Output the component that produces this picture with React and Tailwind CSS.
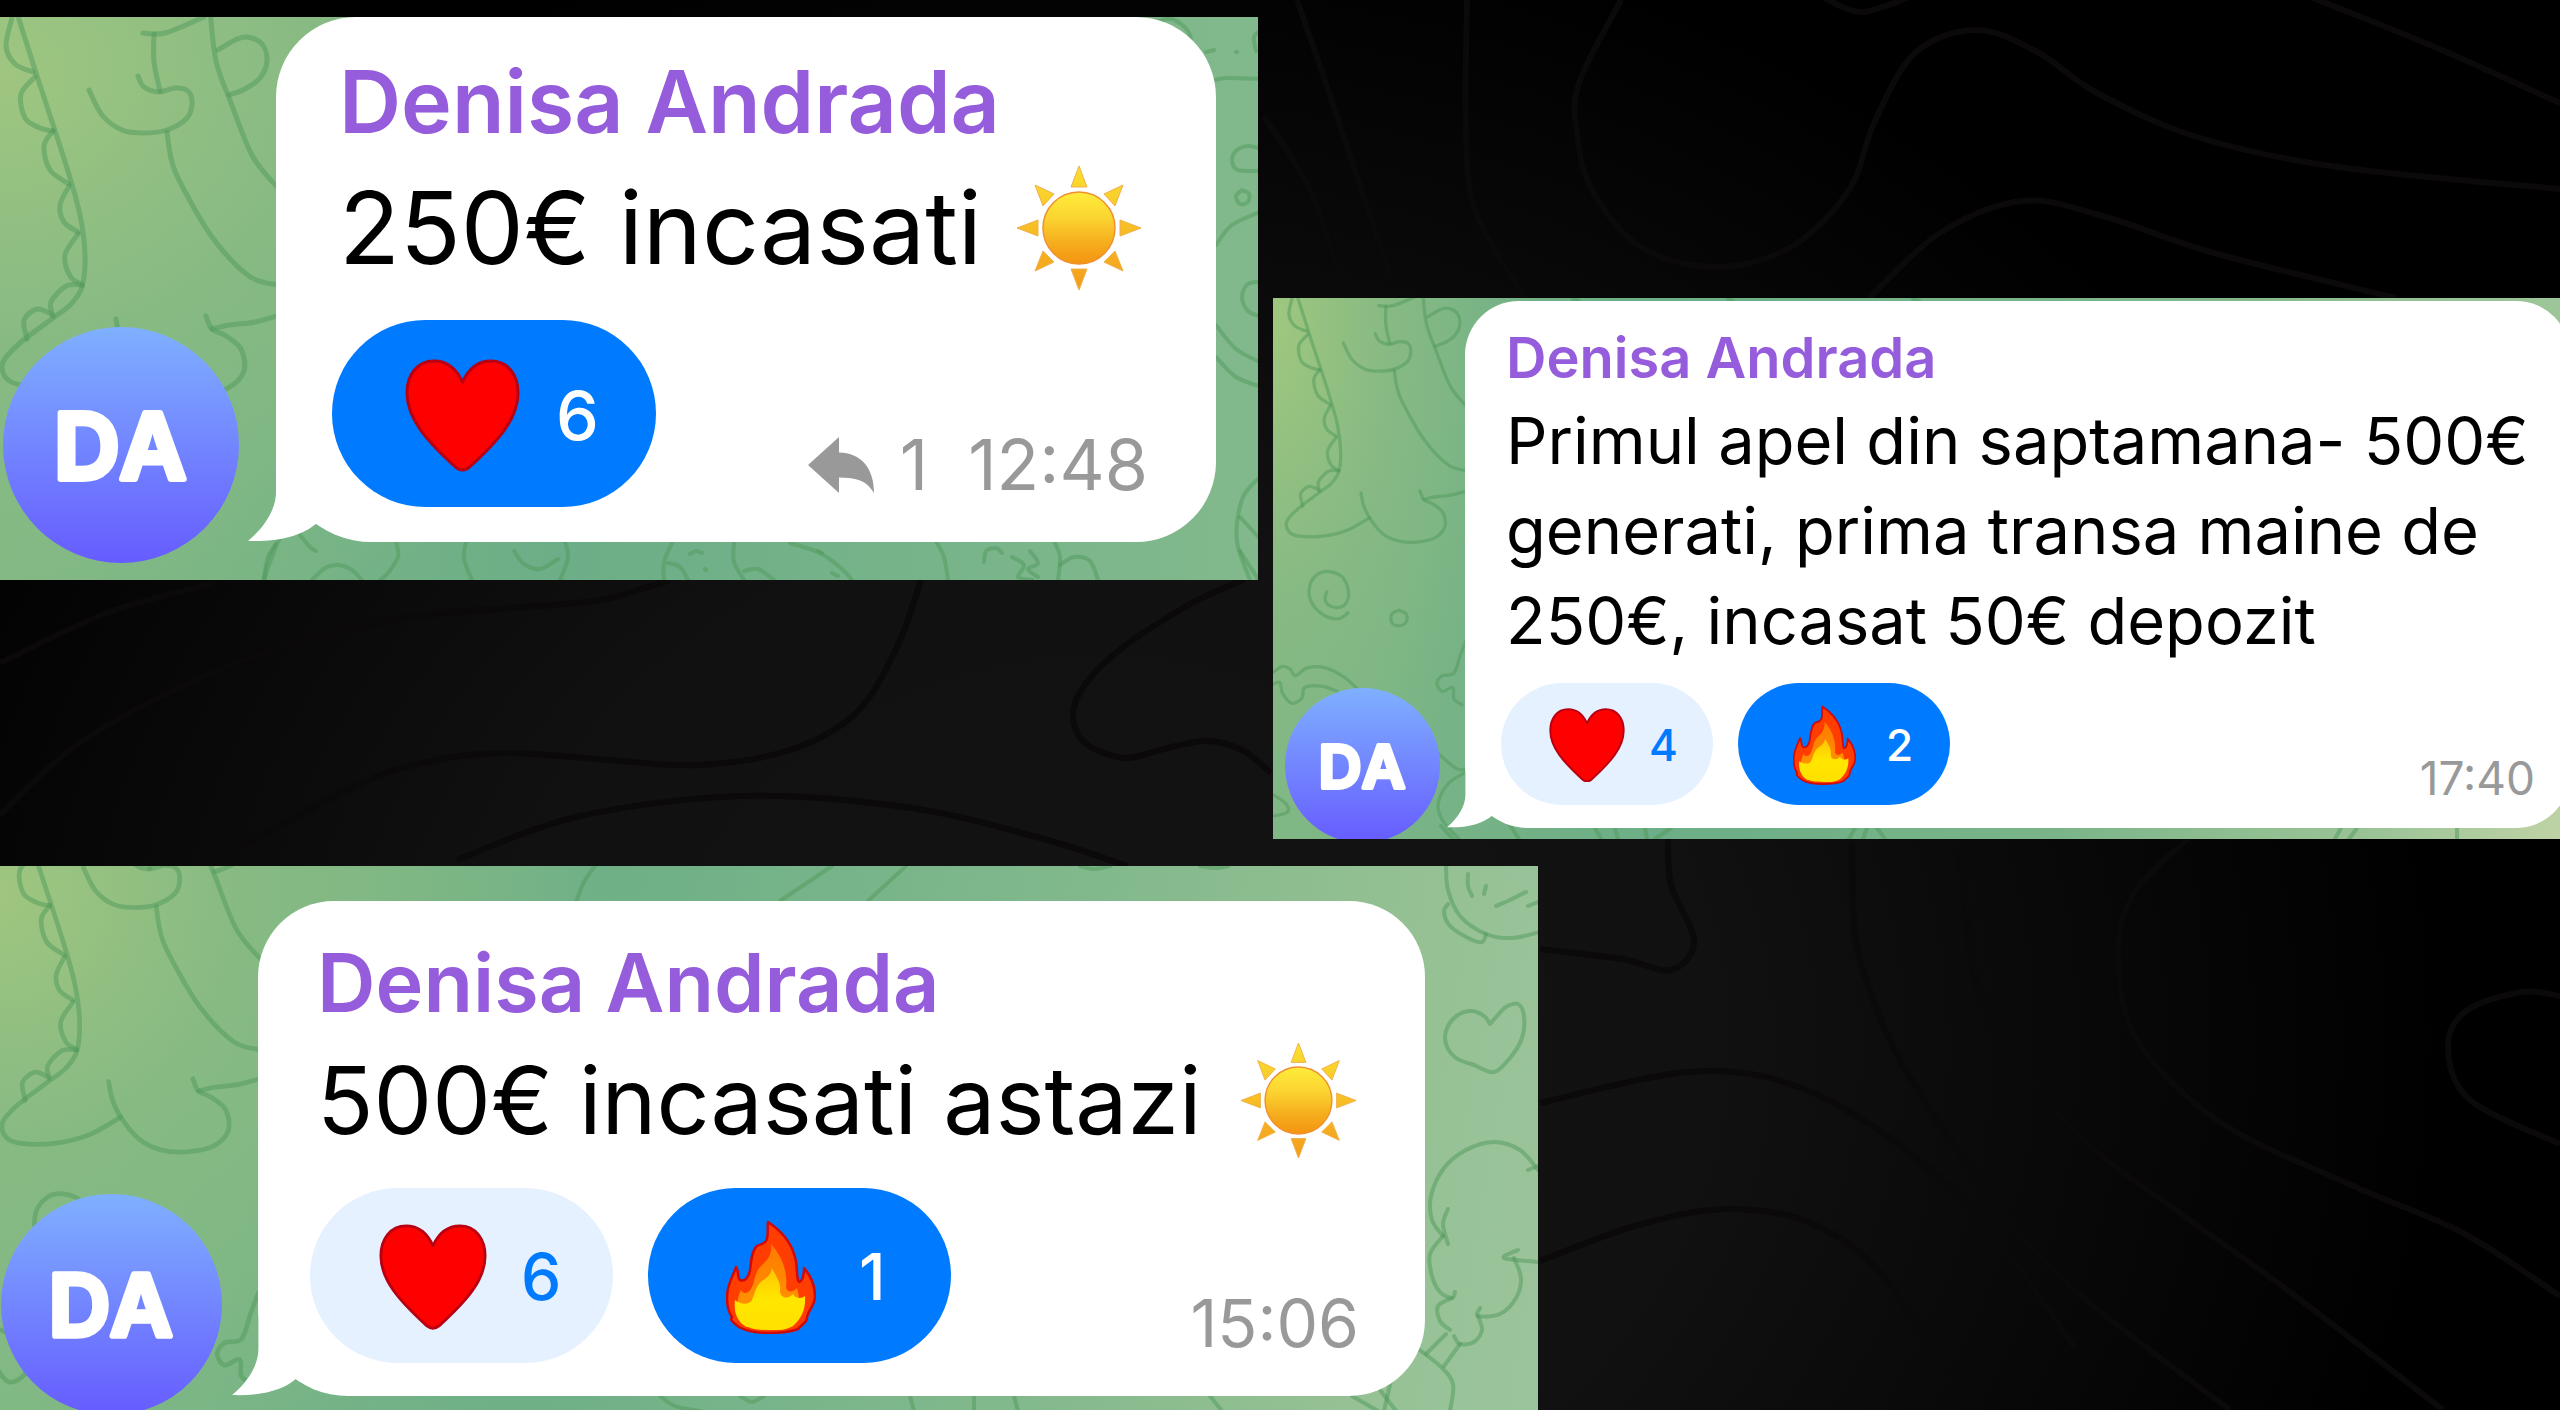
import React from "react";

/* ---------- helpers ---------- */

// Smooth open curve through a list of [x, y] points.
function curve(points) {
  let d = `M${points[0][0]} ${points[0][1]}`;
  for (let i = 0; i < points.length - 1; i++) {
    const p0 = points[i - 1] || points[i];
    const p1 = points[i];
    const p2 = points[i + 1];
    const p3 = points[i + 2] || p2;
    d += ` C${p1[0] + (p2[0] - p0[0]) / 6} ${p1[1] + (p2[1] - p0[1]) / 6} ${p2[0] - (p3[0] - p1[0]) / 6} ${p2[1] - (p3[1] - p1[1]) / 6} ${p2[0]} ${p2[1]}`;
  }
  return d;
}

/* ---------- dark page backdrop ---------- */

const CONTOURS = [
  [[1621, 0], [1579, 83], [1577, 133], [1592, 190], [1641, 247], [1716, 267], [1791, 247], [1849, 190], [1874, 123], [1915, 53], [1977, 30], [2039, 53], [2097, 93], [2197, 137], [2338, 167], [2560, 189]],
  [[1824, -2], [1861, 12], [1907, -2]],
  [[2313, -2], [2430, 45], [2560, 103]],
  [[1869, 298], [1940, 233], [2023, 201], [2106, 217], [2214, 253], [2396, 298]],
  [[1467, 0], [1466, 133], [1476, 213], [1525, 298]],
  [[1297, 0], [1335, 110], [1397, 298]],
  [[1264, 117], [1310, 190], [1343, 287]],
  [[1668, 839], [1671, 885], [1694, 941], [1671, 970], [1622, 959], [1540, 949]],
  [[1852, 841], [1855, 934], [1872, 996], [1904, 1067], [1977, 1178], [2069, 1285], [2230, 1410]],
  [[1960, 852], [1977, 985], [2016, 1059], [2088, 1144], [2187, 1218], [2286, 1289], [2443, 1410]],
  [[2190, 837], [2134, 893], [2118, 956], [2138, 1041], [2220, 1122], [2351, 1185], [2463, 1233], [2560, 1296]],
  [[2560, 996], [2522, 992], [2466, 1011], [2448, 1048], [2470, 1100], [2560, 1144]],
  [[1540, 1103], [1688, 1072], [1793, 1085], [1898, 1144], [1990, 1230], [2075, 1348]],
  [[1540, 1261], [1635, 1226], [1727, 1209], [1813, 1224], [1885, 1278], [1950, 1385]],
  [[0, 663], [107, 613], [214, 583]],
  [[0, 815], [74, 747], [181, 687], [304, 640], [411, 617], [510, 608], [600, 600], [670, 580]],
  [[239, 847], [362, 783], [436, 760], [510, 753], [609, 760], [699, 765], [790, 750], [856, 713], [897, 647], [921, 580]],
  [[1245, 579], [1185, 607], [1111, 657], [1075, 703], [1082, 740], [1123, 758], [1160, 750], [1205, 741], [1242, 750], [1271, 773]],
  [[457, 860], [576, 817], [740, 796], [905, 807], [1037, 837], [1127, 866]],
];

function Backdrop() {
  return (
    <svg className="absolute inset-0 h-full w-full" viewBox="0 0 2560 1410" preserveAspectRatio="xMidYMid slice" aria-hidden="true">
      <g fill="none" stroke="#0b090a" strokeWidth="6">
        {CONTOURS.map((points, i) => (
          <path key={i} d={curve(points)} />
        ))}
      </g>
    </svg>
  );
}

/* ---------- wallpaper doodles ---------- */

const DINO = [
  [[16, 10], [39, 82], [67, 168], [80, 215], [85, 255], [82, 287], [70, 305], [53, 318], [20, 343], [3, 362], [6, 378], [22, 385], [58, 385], [95, 376], [129, 357]],
  [[116, 319], [120, 338], [129, 357], [148, 380], [172, 392], [200, 394], [228, 388], [244, 371], [241, 349], [226, 336], [212, 329], [206, 316]],
  [[212, 329], [229, 325], [255, 322], [290, 312]],
  [[167, 132], [171, 158], [180, 182], [212, 237], [249, 276], [278, 285]],
  [[89, 90], [102, 115], [122, 130], [143, 133], [167, 130], [187, 118], [192, 103], [188, 91], [175, 88], [159, 92], [144, 87], [138, 76]],
  [[154, 34], [154, 62], [160, 91]],
  [[143, 33], [165, 33], [204, 17]],
  [[210, 10], [216, 61], [231, 103], [253, 157], [280, 190]],
  [[218, 50], [235, 40], [247, 37], [262, 44], [267, 61], [260, 78], [245, 89], [229, 95]],
  [[12, 18], [6, 46], [15, 64], [33, 72]],
  [[35, 77], [21, 94], [25, 118], [40, 128], [53, 131]],
  [[53, 131], [44, 146], [50, 170], [69, 184]],
  [[69, 186], [60, 205], [64, 222], [78, 232]],
  [[78, 234], [65, 255], [70, 276], [82, 285]],
  [[82, 285], [66, 286], [51, 302], [53, 316]],
  [[51, 314], [37, 309], [24, 320], [27, 339]],
  [[96, 502], [82, 511], [60, 506], [40, 485], [38, 460], [50, 443], [68, 439], [88, 448], [97, 471], [92, 489], [80, 494], [66, 490], [61, 480], [64, 470]],
  [[174, 498], [163, 504], [163, 517], [174, 522], [185, 516], [185, 504], [174, 498]],
  [[-20, 594], [-4, 584], [8, 588], [16, 598], [34, 586], [62, 586], [90, 600], [110, 618]],
  [[-20, 612], [-8, 608], [-4, 624], [10, 640], [26, 632], [30, 616], [56, 614], [80, 622]],
  [[276, 545], [268, 566], [258, 594], [240, 598], [232, 610], [240, 622], [256, 616], [258, 634], [270, 642]],
  [[232, 715], [262, 740], [280, 742], [250, 762], [234, 792], [240, 818], [268, 850]],
  [[-18, 780], [0, 792], [4, 806], [-16, 812]],
];

function Doodles({ transform, extra }) {
  return (
    <svg className="absolute inset-0 h-full w-full" aria-hidden="true">
      <g fill="none" stroke="#4f9a5c" strokeOpacity="0.5" strokeLinecap="round">
        <g transform={transform} strokeWidth="5">
          {DINO.map((points, i) => (
            <path key={i} d={curve(points)} />
          ))}
        </g>
        <g strokeWidth="4">
          {extra.map((points, i) => (
            <path key={i} d={curve(points)} />
          ))}
        </g>
      </g>
    </svg>
  );
}

const LARGE_EXTRA = [
  [[264, 563], [268, 540], [280, 522]],
  [[300, 518], [310, 530], [316, 534]],
  [[312, 563], [325, 551], [338, 548], [352, 553], [362, 563]],
  [[396, 524], [398, 540], [388, 556], [380, 563]],
  [[466, 524], [464, 542], [472, 563]],
  [[564, 522], [568, 540], [560, 563]],
  [[514, 534], [524, 547], [540, 552], [558, 542]],
  [[664, 563], [664, 545], [672, 526]],
  [[668, 546], [680, 550], [688, 563]],
  [[734, 526], [734, 545], [744, 563]],
  [[744, 554], [758, 552], [774, 563]],
  [[790, 526], [820, 536], [842, 552], [852, 563]],
  [[690, 537], [696, 534], [702, 536]],
  [[818, 534], [822, 536]], [[832, 556], [838, 559]], [[705, 552], [706, 553]],
  [[936, 524], [944, 540], [948, 563]],
  [[984, 545], [986, 534], [996, 531], [1002, 536]],
  [[1012, 540], [1024, 548], [1018, 560], [1032, 563]],
  [[1030, 534], [1038, 546], [1028, 552], [1038, 560]],
  [[1054, 524], [1060, 540], [1058, 563]],
  [[1060, 548], [1074, 540], [1090, 544], [1098, 563]],
  [[1156, 5], [1172, 2], [1188, 14], [1190, 30], [1178, 44]],
  [[1206, 35], [1214, 33]], [[1236, 35], [1237, 35]], [[1262, 12], [1254, 20], [1256, 34]],
  [[1212, 64], [1226, 61], [1262, 62]],
  [[1262, 132], [1248, 129], [1236, 134], [1232, 144], [1238, 153], [1262, 154]],
  [[1242, 173], [1236, 179], [1240, 187], [1248, 185], [1249, 177], [1242, 173]],
  [[1216, 228], [1232, 208], [1262, 194]],
  [[1262, 265], [1248, 267], [1242, 280], [1248, 294], [1262, 300]],
  [[1216, 308], [1236, 332], [1262, 346]],
  [[1216, 340], [1236, 360], [1262, 370]],
  [[1262, 458], [1244, 478], [1237, 506], [1238, 530], [1250, 563]],
  [[1240, 500], [1262, 524]], [[1240, 534], [1258, 562]],
];

const SMALL_EXTRA = [
  [[300, 1], [306, 3]], [[455, 1], [460, 3]], [[640, 1], [646, 3]],
  [[168, 528], [180, 541]], [[235, 524], [246, 541]], [[322, 530], [328, 541]], [[342, 530], [345, 541]],
  [[372, 530], [374, 541]], [[382, 541], [398, 530]], [[576, 541], [582, 530]], [[590, 541], [594, 530]], [[604, 530], [612, 541]],
  [[1062, 541], [1068, 530]], [[1076, 541], [1084, 530]], [[1184, 530], [1184, 541]],
];

const MEDIUM_EXTRA = [
  [[595, 0], [584, 16], [576, 36]],
  [[832, 0], [780, 35]], [[906, 0], [868, 35]],
  [[1080, 0], [1094, 3], [1110, 0]], [[1200, 0], [1216, 2], [1228, 0]],
  [[1446, 0], [1448, 24], [1460, 50], [1486, 68], [1512, 72], [1540, 66]],
  [[1448, 38], [1444, 46], [1450, 60], [1468, 72], [1482, 76], [1486, 68]],
  [[1468, 8], [1468, 20], [1472, 30]], [[1486, 20], [1484, 28]], [[1496, 40], [1510, 34], [1526, 26]], [[1528, 40], [1538, 36]],
  [[1490, 158], [1484, 150], [1472, 145], [1458, 149], [1447, 162], [1446, 178], [1456, 192], [1474, 199], [1494, 206], [1510, 192], [1522, 172], [1524, 150], [1518, 138], [1506, 141], [1497, 150], [1490, 158]],
  [[1538, 304], [1520, 284], [1494, 276], [1466, 284], [1444, 302], [1431, 330], [1432, 354], [1443, 370]],
  [[1538, 300], [1528, 304]],
  [[1448, 343], [1443, 358], [1448, 378]],
  [[1443, 370], [1430, 388], [1432, 410], [1440, 426], [1452, 432], [1455, 426]],
  [[1518, 384], [1504, 392], [1538, 396]],
  [[1514, 392], [1521, 412], [1516, 432], [1500, 448], [1478, 450], [1480, 442]],
  [[1452, 432], [1438, 440], [1440, 455], [1450, 464]],
  [[1478, 450], [1482, 464], [1474, 476], [1460, 478], [1454, 470]],
  [[1446, 468], [1426, 488]], [[1460, 478], [1444, 500]],
  [[1414, 480], [1440, 500], [1453, 518], [1450, 545]],
  [[1352, 530], [1378, 545]], [[1380, 524], [1396, 545]], [[1392, 510], [1384, 545]], [[1210, 530], [1222, 545]],
  [[660, 530], [675, 540], [700, 545]], [[740, 530], [752, 536], [764, 530]],
  [[910, 530], [914, 545]], [[974, 530], [974, 545]], [[1014, 530], [1018, 545]],
];

/* ---------- emoji and icons ---------- */

function Sun({ className }) {
  return (
    <svg className={className} viewBox="0 0 126 126" role="img" aria-label="sun">
      <defs>
        <linearGradient id="sunDisc" x1="0" y1="0" x2="0" y2="1">
          <stop offset="0" stopColor="#ffec3a" />
          <stop offset="0.35" stopColor="#fbd531" />
          <stop offset="0.7" stopColor="#f6ae1e" />
          <stop offset="1" stopColor="#f49410" />
        </linearGradient>
        <linearGradient id="sunRays" gradientUnits="userSpaceOnUse" x1="0" y1="0" x2="0" y2="126">
          <stop offset="0" stopColor="#fbe12f" />
          <stop offset="1" stopColor="#f39b1b" />
        </linearGradient>
      </defs>
      <path
        fill="url(#sunRays)"
        stroke="#f0b04a"
        strokeWidth="1"
        strokeLinejoin="round"
        d="M63 1L71 22H55ZM63 125L71 104H55ZM1 63L22 55V71ZM125 63L104 55V71ZM19 20L38 29L27 41ZM107 20L99 41L88 29ZM19 106L27 86L38 97ZM107 106L88 97L99 86Z"
      />
      <circle cx="63" cy="63" r="36" fill="url(#sunDisc)" stroke="#ee9030" strokeWidth="1.5" />
    </svg>
  );
}

function Heart({ className }) {
  return (
    <svg className={className} viewBox="0 0 115 113" role="img" aria-label="heart">
      <path
        fill="#ff0000"
        stroke="#b80012"
        strokeWidth="3"
        strokeLinejoin="round"
        d="M57.5 23C51 9 41 2 29 2C12 2 2 16 2 34C2 60 22 82 51 108.500C55.500 112 59.500 112 64 108.500C93 82 113 60 113 34C113 16 103 2 86 2C74 2 64 9 57.500 23Z"
      />
    </svg>
  );
}

function Fire({ className }) {
  return (
    <svg className={className} viewBox="0 0 90 114" role="img" aria-label="fire">
      <defs>
        <linearGradient id="fireMid" x1="0" y1="0" x2="0" y2="1">
          <stop offset="0" stopColor="#ff7a00" />
          <stop offset="1" stopColor="#ff9a00" />
        </linearGradient>
        <linearGradient id="fireCore" x1="0" y1="0" x2="0" y2="1">
          <stop offset="0" stopColor="#ffc400" />
          <stop offset="0.5" stopColor="#ffe600" />
          <stop offset="1" stopColor="#ffe100" />
        </linearGradient>
      </defs>
      <path
        fill="#ff3d00"
        stroke="#cf0a0a"
        strokeWidth="2.5"
        strokeLinejoin="round"
        d="M42 2C54 10 64 21 68 34C72 45 70 53 72 60C73 65 78 60 78 48C84 55 89 65 89 76C89 86 82 90 81 97C82 102 75 105 72 109C64 112 52 113 43 113C32 113 20 111 13 107C10 104 3 101 6 97C2 92 1 84 1 77C1 64 7 57 10 47C13 50 11 58 14 60C19 62 23 57 24 50C25 41 26 30 31 26C34 24 37 25 40 21C43 16 41 8 42 2Z"
      />
      <path
        fill="url(#fireMid)"
        d="M45 24C56 36 62 52 60 68C62 73 67 72 71 68C75 84 76 98 66 107H20C9 100 9 82 15 70C17 74 22 74 25 69C30 60 28 52 36 45C43 39 46 33 45 24Z"
      />
      <path
        fill="url(#fireCore)"
        d="M46 48C51 58 55 63 54 71C54 78 62 80 67 74C71 80 76 78 79 76C80 88 76 98 68 105C60 111 52 110 43 110C32 110 22 109 15 103C9 96 8 88 9 80C15 85 23 85 26 80C29 73 30 65 36 61C42 57 45 54 46 48Z"
      />
    </svg>
  );
}

function ReplyArrow() {
  return (
    <svg className="h-[56px] w-[66px]" viewBox="0 0 66 56" aria-hidden="true">
      <path fill="#999999" d="M0 28L31 0V15.500C53 16 66 31 66 56C59 44 49 40.500 31 40.500V56Z" />
    </svg>
  );
}

function Tail({ className }) {
  return (
    <svg className={className} viewBox="0 0 70 100" aria-hidden="true">
      <path fill="#ffffff" d="M28 0V50C28 66 18 84 0 99C28 100 54 95 70 80V0Z" />
    </svg>
  );
}

function Avatar({ className }) {
  return (
    <svg className={className} viewBox="0 0 236 236" role="img" aria-label="DA">
      <defs>
        <linearGradient id="avatarFill" x1="0" y1="0" x2="0" y2="1">
          <stop offset="0" stopColor="#7fb0ff" />
          <stop offset="1" stopColor="#665cff" />
        </linearGradient>
      </defs>
      <circle cx="118" cy="118" r="118" fill="url(#avatarFill)" />
      <text
        x="117"
        y="152"
        textAnchor="middle"
        fill="#ffffff"
        stroke="#ffffff"
        strokeWidth="6"
        strokeLinejoin="round"
        className="font-['Inter',sans-serif] text-[91px] font-semibold [font-kerning:none]"
      >
        DA
      </text>
    </svg>
  );
}

/* ---------- message card ---------- */

const SIZES = {
  lg: {
    row: "pl-[3px] pr-[42px] pb-[38px]",
    avatar: "-mb-[21px] h-[236px] w-[236px]",
    bubble: "ml-[37px] rounded-[80px] rounded-bl-[96px] pt-[35px] pb-[35px] pl-[56px] pr-[68px]",
    tail: "-left-[28px] h-[100px] w-[70px]",
    name: "ml-[7px] text-[86px] leading-[100px]",
    text: "ml-[7px] mt-[7px] text-[100px] leading-[138px]",
    sun: "ml-[34px] h-[126px] w-[126px]",
    reactions: "mt-[23px] gap-[38px]",
    pill: "h-[187px] w-[324px] gap-[36px] pt-[3px] pl-[73px] text-[68px]",
    emojiBox: "w-[115px]",
    heart: "w-[115px]",
    fire: "w-[97px]",
    meta: "mb-[6px] gap-[40px] text-[70px] leading-[72px]",
  },
  md: {
    row: "pl-[1px] pr-[113px] pt-[35px] pb-[15px]",
    avatar: "-mb-[19px] h-[221px] w-[221px]",
    bubble: "ml-[36px] rounded-[76px] rounded-bl-[90px] pt-[35px] pb-[33px] pl-[52px] pr-[66px]",
    tail: "-left-[26px] h-[94px] w-[66px]",
    name: "ml-[7px] text-[81px] leading-[94px]",
    text: "ml-[7px] mt-[6px] text-[93px] leading-[129px]",
    sun: "ml-[39px] h-[117px] w-[117px]",
    reactions: "mt-[23px] gap-[35px]",
    pill: "h-[175px] w-[303px] gap-[34px] pt-[3px] pl-[69px] text-[64px]",
    emojiBox: "w-[108px]",
    heart: "w-[108px]",
    fire: "w-[90px]",
    meta: "mb-[6px] gap-[22px] text-[66px] leading-[68px]",
  },
  sm: {
    row: "-mr-[10px] pl-[12px] pt-[3px] pb-[11px]",
    avatar: "-mb-[15px] h-[155px] w-[155px]",
    bubble: "ml-[25px] rounded-[54px] rounded-bl-[64px] pt-[25px] pb-[23px] pl-[36px] pr-[35px]",
    tail: "-left-[18px] h-[66px] w-[46px]",
    name: "ml-[5px] text-[56px] leading-[64px]",
    text: "ml-[5px] mt-[6px] text-[65px] leading-[90px]",
    sun: "ml-[20px] h-[82px] w-[82px]",
    reactions: "mt-[17px] gap-[25px]",
    pill: "h-[122px] w-[212px] gap-[24px] pt-[2px] pl-[48px] text-[44px]",
    emojiBox: "w-[76px]",
    heart: "w-[76px]",
    fire: "w-[63px]",
    meta: "mb-[3px] gap-[16px] text-[46px] leading-[48px]",
  },
};

function Reaction({ kind, count, active, size }) {
  const Emoji = kind === "fire" ? Fire : Heart;
  return (
    <button
      type="button"
      aria-pressed={active}
      className={`flex items-center rounded-full font-medium ${size.pill} ${active ? "bg-[#007aff] text-white" : "bg-[#e5f1ff] text-[#007aff]"}`}
    >
      <span className={`flex justify-center ${size.emojiBox}`}>
        <Emoji className={kind === "fire" ? size.fire : size.heart} />
      </span>
      <span>{count}</span>
    </button>
  );
}

function MessageCard({ size: key, className, lines, sunny, reactions, replies, time, doodles }) {
  const size = SIZES[key];
  return (
    <article className={`relative overflow-hidden ${className}`}>
      {doodles}
      <div className={`relative flex items-end ${size.row}`}>
        <Avatar className={`shrink-0 ${size.avatar}`} />
        <div className={`relative min-w-0 flex-1 bg-white ${size.bubble}`}>
          <Tail className={`absolute bottom-0 ${size.tail}`} />
          <h2 className={`relative font-semibold text-[#955cdb] ${size.name}`}>Denisa Andrada</h2>
          <div className={`relative flex items-center whitespace-nowrap text-black ${size.text}`}>
            <p>
              {lines.map((line) => (
                <span key={line} className="block">
                  {line}
                </span>
              ))}
            </p>
            {sunny && <Sun className={size.sun} />}
          </div>
          <div className={`relative flex items-end ${size.reactions}`}>
            {reactions.map((reaction) => (
              <Reaction key={reaction.kind} {...reaction} size={size} />
            ))}
            <div className={`ml-auto flex items-center text-[#999999] ${size.meta}`}>
              {replies && (
                <span className="flex items-center gap-[26px]">
                  <ReplyArrow />
                  {replies}
                </span>
              )}
              <time>{time}</time>
            </div>
          </div>
        </div>
      </div>
    </article>
  );
}

/* ---------- page ---------- */

export default function App() {
  return (
    <main className="relative h-screen overflow-hidden bg-black bg-[radial-gradient(1350px_1150px_at_43%_74%,#131313_0%,#111111_45%,#000000_100%)] font-['Inter','Liberation_Sans',sans-serif]">
      <Backdrop />
      <div className="relative flex items-start gap-[15px] pt-[17px]">
        <MessageCard
          size="lg"
          className="w-[1258px] shrink-0 bg-[radial-gradient(700px_600px_at_0%_10%,#9fc680_0%,#87ba83_45%,transparent_100%),linear-gradient(90deg,#82b985_0%,#6cae87_45%,#82b98c_100%)]"
          lines={["250€ incasati"]}
          sunny
          reactions={[{ kind: "heart", count: 6, active: true }]}
          replies="1"
          time="12:48"
          doodles={<Doodles transform="translate(0 -17)" extra={LARGE_EXTRA} />}
        />
        <MessageCard
          size="sm"
          className="mt-[281px] min-w-0 flex-1 bg-[radial-gradient(240px_560px_at_0%_5%,#9fc77e_0%,#86b984_50%,transparent_100%),radial-gradient(500px_700px_at_100%_100%,#bfd3a5_0%,#98c296_40%,transparent_100%),linear-gradient(90deg,#7fb785_0%,#6cae87_30%,#80b88a_75%,#a0c79a_100%)]"
          lines={["Primul apel din saptamana- 500€", "generati, prima transa maine de", "250€, incasat 50€ depozit"]}
          reactions={[
            { kind: "heart", count: 4, active: false },
            { kind: "fire", count: 2, active: true },
          ]}
          time="17:40"
          doodles={<Doodles transform="translate(12 -14) scale(0.655)" extra={SMALL_EXTRA} />}
        />
      </div>
      <MessageCard
        size="md"
        className="mt-[27px] w-[1538px] bg-[radial-gradient(600px_620px_at_0%_5%,#9fc67f_0%,#87ba83_40%,transparent_100%),linear-gradient(100deg,#82b985_0%,#6fb087_38%,#82b98c_68%,#93c092_85%,#9cc49c_100%)]"
        lines={["500€ incasati astazi"]}
        sunny
        reactions={[
          { kind: "heart", count: 6, active: false },
          { kind: "fire", count: 1, active: true },
        ]}
        time="15:06"
        doodles={<Doodles transform="translate(0 -83) scale(0.936)" extra={MEDIUM_EXTRA} />}
      />
    </main>
  );
}
